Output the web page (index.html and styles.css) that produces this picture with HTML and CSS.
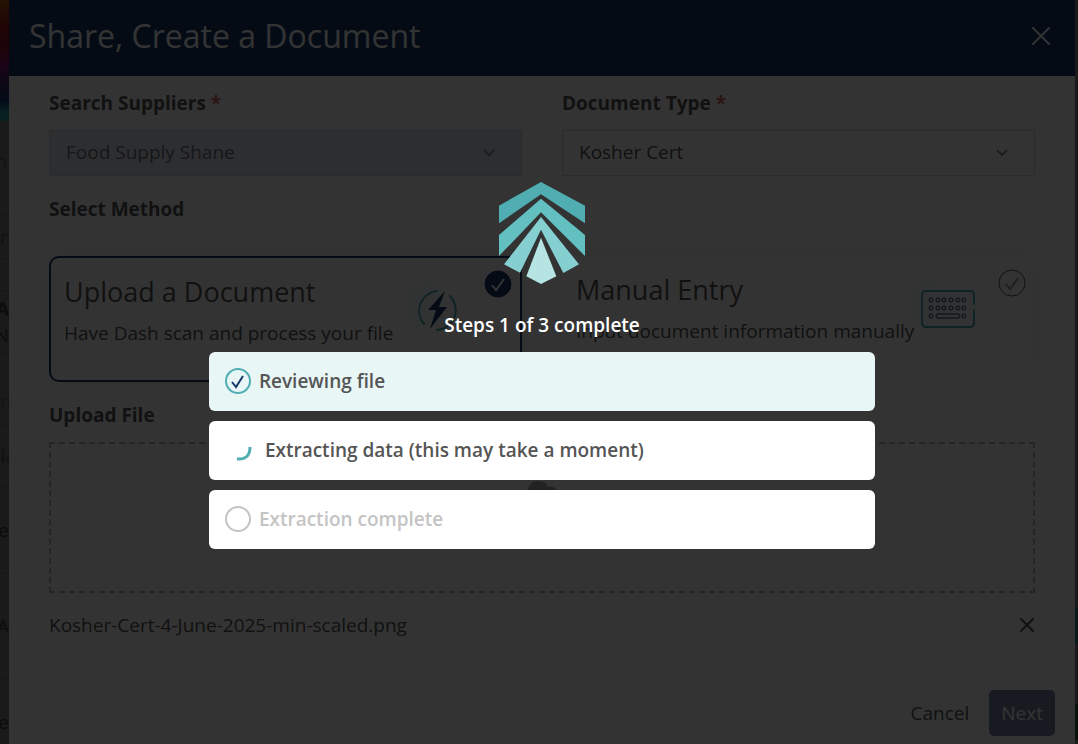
FILE: index.html
```html
<!DOCTYPE html>
<html lang="en">
<head>
<meta charset="UTF-8" />
<meta name="viewport" content="width=device-width, initial-scale=1" />
<title>Share, Create a Document</title>
<link rel="stylesheet" href="styles.css">
</head>
<body>
  <!-- page behind the dialog -->
  <div class="page-left" aria-hidden="true">
    <div class="art"></div>
    <div class="row r1">m</div>
    <div class="row r2">re</div>
    <div class="row r3"></div>
    <div class="row r4"><b>A</b><span>N</span></div>
    <div class="row r5">ng</div>
    <div class="row r6"><b>la</b></div>
    <div class="row r7">Ne</div>
    <div class="row r8">HA</div>
    <div class="row r9">fe</div>
  </div>

  <div class="modal" role="dialog" aria-labelledby="modal-title">
    <header class="modal-header">
      <h1 id="modal-title">Share, Create a Document</h1>
      <button type="button" class="icon-btn close" aria-label="Close">
        <svg width="20" height="20" viewBox="0 0 20 20"><path d="M2 2 L18 18 M18 2 L2 18" /></svg>
      </button>
    </header>

    <form class="modal-body">
      <div class="columns">
        <div class="field">
          <label for="supplier">Search Suppliers <span class="required">*</span></label>
          <div class="select">
            <select id="supplier" disabled><option>Food Supply Shane</option></select>
            <svg width="12" height="8" viewBox="0 0 12 8"><path d="M1 1 L6 6 L11 1" /></svg>
          </div>
        </div>
        <div class="field">
          <label for="doc-type">Document Type <span class="required">*</span></label>
          <div class="select">
            <select id="doc-type"><option>Kosher Cert</option></select>
            <svg width="12" height="8" viewBox="0 0 12 8"><path d="M1 1 L6 6 L11 1" /></svg>
          </div>
        </div>
      </div>

      <h2 class="section-title">Select Method</h2>
      <div class="columns methods">
        <button type="button" class="method selected">
          <span class="method-text">
            <span class="method-name">Upload a Document</span>
            <span class="method-info">Have Dash scan and process your file</span>
          </span>
          <svg class="method-icon" width="60" height="56" viewBox="0 0 60 56">
            <path class="hex" d="M22 0 L44 13 V39 L22 52 L0 39 V13 Z" />
            <path class="teal" d="M34 11 A20 20 0 0 0 21 44 M47 16 A20 20 0 0 1 34 50" />
            <path class="bolt" d="M42 11 L25 30 H33 L27 49 L44 27 H36 Z" />
          </svg>
          <svg class="badge" width="28" height="28" viewBox="0 0 28 28">
            <circle cx="14" cy="14" r="13" /><path d="M8 15 L12 20 L20 9" />
          </svg>
        </button>
        <button type="button" class="method">
          <span class="method-text">
            <span class="method-name">Manual Entry</span>
            <span class="method-info">Input document information manually</span>
          </span>
          <svg class="method-icon" width="70" height="56" viewBox="0 0 70 56">
            <path class="hex" d="M22 0 L44 13 V39 L22 52 L0 39 V13 Z" />
            <path class="teal" d="M67 26 V17 Q67 13 63 13 H19 Q15 13 15 17 V45 Q15 49 19 49 H63 Q67 49 67 45 V32" />
            <g class="keys">
              <circle cx="24" cy="22" r="2" /><circle cx="31" cy="22" r="2" /><circle cx="37" cy="22" r="2" /><circle cx="44" cy="22" r="2" /><circle cx="51" cy="22" r="2" /><circle cx="57" cy="22" r="2" />
              <circle cx="24" cy="30" r="2" /><circle cx="31" cy="30" r="2" /><circle cx="37" cy="30" r="2" /><circle cx="44" cy="30" r="2" /><circle cx="51" cy="30" r="2" /><circle cx="57" cy="30" r="2" />
              <circle cx="24" cy="38" r="2" /><rect x="29" y="36" width="24" height="4" rx="2" /><circle cx="57" cy="38" r="2" />
            </g>
          </svg>
          <svg class="badge" width="28" height="28" viewBox="0 0 28 28">
            <circle cx="14" cy="14" r="13" /><path d="M8 15 L12 20 L20 9" />
          </svg>
        </button>
      </div>

      <h2 class="section-title">Upload File</h2>
      <div class="dropzone">
        <svg width="48" height="34" viewBox="0 0 48 34"><path d="M10 34 A10 10 0 0 1 9 13 Q10 0 20 0 Q28 0 30 6 Q37 4 40 12 A10 10 0 0 1 38 34 Z" /></svg>
      </div>
      <div class="file">
        <span>Kosher-Cert-4-June-2025-min-scaled.png</span>
        <button type="button" class="icon-btn remove" aria-label="Remove file">
          <svg width="16" height="16" viewBox="0 0 16 16"><path d="M2 2 L14 14 M14 2 L2 14" /></svg>
        </button>
      </div>
    </form>

    <footer class="modal-footer">
      <button type="button" class="btn">Cancel</button>
      <button type="button" class="btn primary">Next</button>
    </footer>

    <div class="overlay">
      <svg class="logo" width="86" height="102" viewBox="0 0 258 306">
        <path fill="#50adb2" d="M126 0 L258 71 V124 L126 37 L0 124 V71 Z" />
        <path fill="#63c0c0" d="M126 50 L258 159 V222 L126 91 L0 222 V159 Z" />
        <path fill="#86cfd1" d="M126 105 L240 247 L193 273 L126 143 L63 272 L15 247 Z" />
        <path fill="#b5e4e2" d="M126 167 L172 283 L126 306 L82 283 Z" />
      </svg>
      <p class="progress">Steps 1 of 3 complete</p>
      <ol class="steps">
        <li class="step done">
          <svg width="26" height="26" viewBox="0 0 26 26"><circle cx="13" cy="13" r="12" /><path d="M7 14 L11 19 L18 8" /></svg>
          <span>Reviewing file</span>
        </li>
        <li class="step active">
          <svg width="32" height="26" viewBox="0 0 32 26"><path d="M12 22 Q25 23 25 10" /></svg>
          <span>Extracting data (this may take a moment)</span>
        </li>
        <li class="step waiting">
          <svg width="26" height="26" viewBox="0 0 26 26"><circle cx="13" cy="13" r="12" /></svg>
          <span>Extraction complete</span>
        </li>
      </ol>
    </div>
  </div>

  <div class="page-right" aria-hidden="true">
    <div class="bar-teal"></div>
    <div class="bar-green"></div>
  </div>
</body>
</html>
```
FILE: styles.css
```css
* {
  box-sizing: border-box;
}
body {
  margin: 0;
  display: flex;
  min-height: 100vh;
  background: #1a1a1a;
  color: #555;
  font-family: "Open Sans", "Noto Sans", sans-serif;
  font-size: 19px;
  line-height: 26px;
}
button, select {
  font: inherit;
  color: inherit;
}
h1, h2, p, ol {
  margin: 0;
  padding: 0;
}

/* page behind the dialog */
.page-left {
  width: 9px;
  overflow: hidden;
  color: #0c0c0c;
}
.art {
  height: 121px;
  background: linear-gradient(170deg, #241302 0, #1f0505 25px, #1c0307 45px, #1c0418 65px, #0e0714 80px, #030b18 100px, #082020 112px);
}
.row {
  display: flex;
  flex-direction: column;
  justify-content: center;
  align-items: flex-end;
  border-bottom: 1px solid #161616;
}
.r1 { height: 94px; padding: 0 2px 14px 0; color: #121212; }
.r2 { height: 44px; align-items: flex-start; color: #121212; }
.r3 { height: 32px; }
.r4 { height: 63px; }
.r5 { height: 72px; padding-top: 22px; align-items: flex-start; color: #121212; }
.r6 { height: 61px; align-items: flex-start; color: #121212; }
.r7 { height: 87px; }
.r8 { height: 105px; }
.r9 { height: 65px; padding-top: 20px; border-bottom: none; }
.page-right {
  width: 3px;
  display: flex;
  flex-direction: column;
  padding-top: 607px;
  gap: 60px;
}
.bar-teal {
  height: 37px;
  background: #061a1c;
}
.bar-green {
  height: 36px;
  background: #0a100a;
}

/* dialog */
.modal {
  flex: 1;
  position: relative;
  display: flex;
  flex-direction: column;
  background: #fff;
}
.modal-header {
  display: flex;
  align-items: center;
  justify-content: space-between;
  height: 76px;
  padding: 0 24px 4px 20px;
  background: #15376a;
  color: #fff;
}
.modal-header h1 {
  font-size: 32px;
  line-height: 44px;
  font-weight: 400;
}
.icon-btn {
  display: flex;
  padding: 0;
  border: none;
  background: none;
}
.icon-btn svg {
  fill: none;
  stroke: currentColor;
  stroke-width: 2;
  stroke-linecap: round;
}
.modal-body {
  flex: 1;
  padding: 14px 40px 0;
}
.columns {
  display: grid;
  grid-template-columns: 1fr 1fr;
  gap: 40px;
}
.field label {
  display: block;
  margin-bottom: 14px;
  font-weight: 700;
}
.required {
  color: #d9686b;
}
.select {
  position: relative;
}
.select select {
  display: block;
  width: 100%;
  height: 46px;
  padding: 0 16px 2px;
  border: 1px solid #d0d4da;
  border-radius: 0;
  background: #fff;
  appearance: none;
}
.select select:disabled {
  background: #e1e6f0;
  border-color: #d0d7e1;
  color: #6c757d;
  opacity: 1;
}
.select svg {
  position: absolute;
  right: 27px;
  top: 19px;
  fill: none;
  stroke: #8a9199;
  stroke-width: 2;
}
.section-title {
  margin: 20px 0 14px;
  font-size: 19px;
  line-height: 26px;
  font-weight: 700;
}
.methods {
  margin-top: 34px;
  align-items: start;
}
.method {
  position: relative;
  display: flex;
  justify-content: space-between;
  min-height: 124px;
  padding: 14px;
  border: none;
  border-radius: 10px;
  background: #fff;
  box-shadow: 0 0 16px rgba(0, 0, 0, 0.08);
  text-align: left;
}
.method.selected {
  min-height: 126px;
  padding: 14px 13px;
  border: 2px solid #15376a;
}
.method-text {
  display: flex;
  flex-direction: column;
  gap: 8px;
  white-space: nowrap;
}
.method-name {
  font-size: 27px;
  line-height: 40px;
}
.method-icon {
  flex: none;
  margin: 8px 44px 0 -12px;
}
.hex {
  fill: #f4fafa;
}
.teal {
  fill: none;
  stroke: #50adb2;
  stroke-width: 2;
  stroke-linecap: round;
}
.bolt {
  fill: #15376a;
}
.keys {
  fill: none;
  stroke: #15376a;
  stroke-width: 1;
}
.badge {
  position: absolute;
  top: 13px;
  right: 9px;
  fill: none;
  stroke: #555;
}
.badge path {
  stroke: #999;
  stroke-width: 2;
}
.selected .badge {
  top: 12px;
  right: 8px;
}
.selected .badge circle {
  fill: #15376a;
  stroke: #15376a;
}
.selected .badge path {
  stroke: #fff;
}
.dropzone {
  display: flex;
  justify-content: center;
  align-items: flex-start;
  height: 151px;
  padding-top: 37px;
  border: 2px dashed #bbb;
}
.dropzone svg {
  fill: #aaa;
}
.file {
  display: flex;
  align-items: center;
  justify-content: space-between;
  margin-top: 19px;
}
.modal-footer {
  display: flex;
  justify-content: flex-end;
  gap: 8px;
  padding: 0 20px 8px;
}
.btn {
  height: 46px;
  padding: 0 12px;
  border: none;
  border-radius: 5px;
  background: none;
}
.btn.primary {
  background: #7387a5;
  color: #fff;
}

/* progress overlay */
.overlay {
  position: absolute;
  inset: 0;
  display: flex;
  flex-direction: column;
  align-items: center;
  padding-top: 182px;
  background: rgba(0, 0, 0, 0.8);
}
.progress {
  margin: 28px 0 14px;
  color: #fff;
  font-weight: 600;
}
.steps {
  display: flex;
  flex-direction: column;
  gap: 10px;
  width: 62.5%;
  list-style: none;
}
.step {
  display: flex;
  align-items: center;
  gap: 8px;
  height: 59px;
  padding: 0 16px 2px;
  border-radius: 6px;
  background: #fff;
  font-weight: 600;
}
.step svg {
  fill: none;
  stroke: #50adb2;
  stroke-width: 2;
}
.step.done {
  background: #e8f6f6;
}
.step.done path {
  stroke: #15376a;
}
.step.active svg {
  stroke-width: 3;
}
.step.waiting {
  color: #c4c4c4;
}
.step.waiting svg {
  stroke: #c4c4c4;
}
```
